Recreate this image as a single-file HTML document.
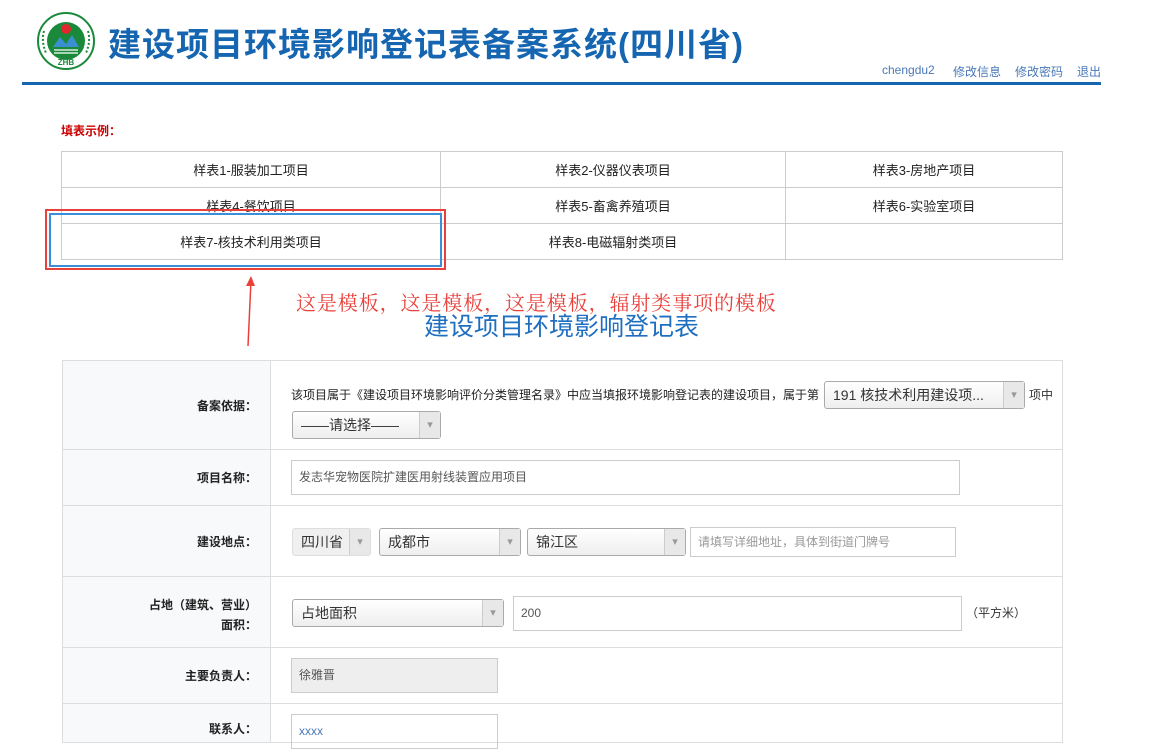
<!DOCTYPE html><html><head><meta charset="utf-8"><style>
body{margin:0;width:1151px;height:732px;overflow:hidden;background:#fff;font-family:"Liberation Sans","Noto Sans CJK SC",sans-serif;font-size:13px;color:#333;position:relative}
.a{position:absolute}
.c{position:absolute;border:1px solid #ccc;box-sizing:border-box;text-align:center;line-height:37px;color:#222}
.lab{position:absolute;left:62px;width:209px;background:#f7f9fb;border:1px solid #ddd;box-sizing:border-box;text-align:right;padding-right:13px;font-weight:bold;font-size:12px;color:#222}
.val{position:absolute;left:270px;width:793px;border:1px solid #ddd;box-sizing:border-box}
.sel{position:absolute;border:1px solid #aaa;border-radius:3px;box-sizing:border-box;background:linear-gradient(#fff,#eee);font-size:14px;color:#333;padding-left:8px}
.sel:after{content:"▾";position:absolute;right:0;top:0;bottom:0;width:20px;border-left:1px solid #ccc;color:#999;font-size:11px;text-align:center;background:#e8e8e8}
.inp{position:absolute;border:1px solid #ccc;box-sizing:border-box;font-size:12px;color:#555;padding-left:7px}
.lk{position:absolute;top:63px;font-size:12px;color:#4a78b8}
</style></head><body>
<svg class="a" style="left:36px;top:11px" width="60" height="60" viewBox="0 0 60 60"><circle cx="30" cy="30" r="28" fill="#fff" stroke="#1a8a3a" stroke-width="2"/><circle cx="30" cy="30" r="19" fill="#1a8a3a"/><circle cx="30" cy="18" r="5" fill="#e0282e"/><path d="M17 36 L24 26 L30 33 L36 24 L43 36Z" fill="#3a8fd0"/><path d="M18 39h24M18 42h24" stroke="#fff" stroke-width="1.2"/><text x="30" y="54" font-size="8" text-anchor="middle" fill="#1a8a3a" font-weight="bold">ZHB</text><path d="M8 20q-3 10 2 22M52 20q3 10-2 22" stroke="#1a8a3a" stroke-width="2" fill="none" stroke-dasharray="2 2"/></svg>
<div class="a" style="left:108px;top:18px;font-size:33px;font-weight:bold;color:#1565b0;letter-spacing:1px">建设项目环境影响登记表备案系统(四川省)</div>
<div class="lk" style="left:882px">chengdu2</div>
<div class="lk" style="left:953px">修改信息</div>
<div class="lk" style="left:1015px">修改密码</div>
<div class="lk" style="left:1077px">退出</div>
<div class="a" style="left:22px;top:82px;width:1079px;height:3px;background:#1565b0"></div>
<div class="a" style="left:61px;top:122px;color:#c00;font-weight:bold;font-size:12px">填表示例：</div>
<div class="c" style="left:61px;top:151px;width:380px;height:37px">样表1-服装加工项目</div>
<div class="c" style="left:440px;top:151px;width:346px;height:37px">样表2-仪器仪表项目</div>
<div class="c" style="left:785px;top:151px;width:278px;height:37px">样表3-房地产项目</div>
<div class="c" style="left:61px;top:187px;width:380px;height:37px">样表4-餐饮项目</div>
<div class="c" style="left:440px;top:187px;width:346px;height:37px">样表5-畜禽养殖项目</div>
<div class="c" style="left:785px;top:187px;width:278px;height:37px">样表6-实验室项目</div>
<div class="c" style="left:61px;top:223px;width:380px;height:37px">样表7-核技术利用类项目</div>
<div class="c" style="left:440px;top:223px;width:346px;height:37px">样表8-电磁辐射类项目</div>
<div class="c" style="left:785px;top:223px;width:278px;height:37px"></div>
<div class="a" style="left:45px;top:209px;width:401px;height:61px;border:2px solid #e8413c;box-sizing:border-box"></div>
<div class="a" style="left:49px;top:213px;width:393px;height:54px;border:2px solid #3a8fd8;box-sizing:border-box"></div>
<svg class="a" style="left:240px;top:272px" width="20" height="76"><path d="M8 74 L11 8" stroke="#e8413c" stroke-width="1.5"/><path d="M6 14 L11 4 L15 14Z" fill="#e8413c"/></svg>
<div class="a" style="left:296px;top:287px;font-size:20px;letter-spacing:0.9px;color:#e8413c;font-family:'Noto Serif CJK SC',serif">这是模板，这是模板，这是模板，辐射类事项的模板</div>
<div class="a" style="left:424px;top:307px;font-size:25px;color:#1f6fc0">建设项目环境影响登记表</div>

<div class="lab" style="top:360px;height:90px;line-height:90px">备案依据：</div>
<div class="val" style="top:360px;height:90px"></div>
<div class="a" style="left:291px;top:386px;font-size:12px;color:#222">该项目属于《建设项目环境影响评价分类管理名录》中应当填报环境影响登记表的建设项目，属于第</div>
<div class="sel" style="left:824px;top:381px;width:201px;height:28px;line-height:26px">191 核技术利用建设项...</div>
<div class="a" style="left:1029px;top:386px;font-size:12px">项中</div>
<div class="sel" style="left:292px;top:411px;width:149px;height:28px;line-height:26px">——请选择——</div>

<div class="lab" style="top:449px;height:57px;line-height:57px">项目名称：</div>
<div class="val" style="top:449px;height:57px"></div>
<div class="inp" style="left:291px;top:460px;width:669px;height:35px;line-height:33px">发志华宠物医院扩建医用射线装置应用项目</div>

<div class="lab" style="top:505px;height:72px;line-height:72px">建设地点：</div>
<div class="val" style="top:505px;height:72px"></div>
<div class="sel" style="left:292px;top:528px;width:79px;height:28px;line-height:26px;background:#f0f0f0;border-color:#ddd">四川省</div>
<div class="sel" style="left:379px;top:528px;width:142px;height:28px;line-height:26px">成都市</div>
<div class="sel" style="left:527px;top:528px;width:159px;height:28px;line-height:26px">锦江区</div>
<div class="inp" style="left:690px;top:527px;width:266px;height:30px;line-height:28px;color:#999">请填写详细地址，具体到街道门牌号</div>

<div class="lab" style="top:576px;height:72px;padding-top:18px;line-height:20px">占地（建筑、营业）<br>面积：</div>
<div class="val" style="top:576px;height:72px"></div>
<div class="sel" style="left:292px;top:599px;width:212px;height:28px;line-height:26px">占地面积</div>
<div class="inp" style="left:513px;top:596px;width:449px;height:35px;line-height:33px">200</div>
<div class="a" style="left:966px;top:604px;font-size:12px">（平方米）</div>

<div class="lab" style="top:647px;height:57px;line-height:57px">主要负责人：</div>
<div class="val" style="top:647px;height:57px"></div>
<div class="inp" style="left:291px;top:658px;width:207px;height:35px;line-height:33px;background:#eee">徐雅晋</div>

<div class="lab" style="top:703px;height:40px;line-height:50px">联系人：</div>
<div class="val" style="top:703px;height:40px"></div>
<div class="inp" style="left:291px;top:714px;width:207px;height:35px;line-height:33px;color:#4a78b8">xxxx</div>
</body></html>
